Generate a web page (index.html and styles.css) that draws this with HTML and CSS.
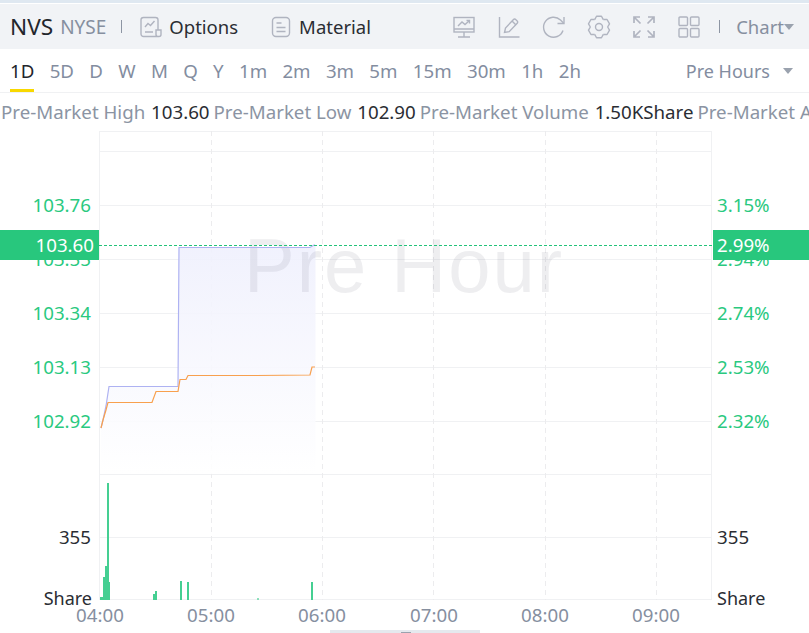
FILE: index.html
```html
<!DOCTYPE html>
<html>

<head>
  <title>NVS Pre Hours</title>
  <link rel="stylesheet" href="styles.css">
</head>

<body>
  <div class="toolbar">
    <span class="symbol">NVS</span>
    <span class="market">NYSE</span>
    <span class="divider"></span>
    <a class="tool-link options">
      <svg width="24" height="24" viewBox="0 0 24 24" fill="none" stroke="#b0b4c0" stroke-width="1.4">
        <path d="M19 15V5a2.500 2.500 0 0 0-2.500-2.500h-12A2.500 2.500 0 0 0 2 5v14a2.500 2.500 0 0 0 2.500 2.500H20a2 2 0 0 0 2-2V15h-5v4.500a2 2 0 0 0 2 2"/>
        <path d="M6 12l3-3.500 2.500 2 4-4.500M6 17h8"/>
      </svg>
      Options
    </a>
    <a class="tool-link material">
      <svg width="20" height="24" viewBox="0 0 20 24" fill="none" stroke="#b0b4c0" stroke-width="1.4">
        <rect x="1.500" y="2.500" width="17" height="19" rx="3.500"/>
        <path d="M5.500 8h5M5.500 12.500h9M5.500 16.500h9"/>
      </svg>
      Material
    </a>
    <div class="tool-icons">
      <svg width="24" height="24" viewBox="0 0 24 24" fill="none" stroke="#b0b4c0" stroke-width="1.4">
        <rect x="2" y="2.500" width="20" height="14.500"/>
        <path d="M2 14h20M12 17v5M6 22h12M6 11l4-4 3 2.500 4.500-4"/>
        <path d="M14.500 5.500h3v3"/>
      </svg>
      <svg width="24" height="24" viewBox="0 0 24 24" fill="none" stroke="#b0b4c0" stroke-width="1.4">
        <path d="M2.500 2v20h20"/>
        <path d="M7.500 17.500l1-4.500 8-8.500a1.500 1.500 0 0 1 2.200 0l1.500 1.500a1.500 1.500 0 0 1 0 2.200l-8 8.500z"/>
        <path d="M15 6l4 4"/>
      </svg>
      <svg width="24" height="24" viewBox="0 0 24 24" fill="none" stroke="#b0b4c0" stroke-width="1.4">
        <path d="M21 15.500A10 10 0 1 1 18.500 5L21.500 8"/>
        <path d="M22 2v6.500h-6.500"/>
      </svg>
      <svg width="24" height="24" viewBox="0 0 24 24" fill="none" stroke="#b0b4c0" stroke-width="1.4" stroke-linejoin="round">
        <path id="gearTooth" d="M7.700 4.550L9.530 1.280H14.470L16.300 4.550"/>
        <use href="#gearTooth" transform="rotate(60 12 12)"/>
        <use href="#gearTooth" transform="rotate(120 12 12)"/>
        <use href="#gearTooth" transform="rotate(180 12 12)"/>
        <use href="#gearTooth" transform="rotate(240 12 12)"/>
        <use href="#gearTooth" transform="rotate(300 12 12)"/>
        <circle cx="12" cy="12" r="3.500"/>
      </svg>
      <svg width="24" height="24" viewBox="0 0 24 24" fill="none" stroke="#b0b4c0" stroke-width="1.7">
        <path d="M2 8V2h6M2 2l6.500 6.500M16 2h6v6M22 2l-6.500 6.500M2 16v6h6M2 22l6.500-6.500M22 16v6h-6M22 22l-6.500-6.500"/>
      </svg>
      <svg width="24" height="24" viewBox="0 0 24 24" fill="none" stroke="#b0b4c0" stroke-width="1.4">
        <rect x="2" y="2" width="8.500" height="8.500" rx="1"/>
        <rect x="13.500" y="2" width="8.500" height="8.500" rx="1"/>
        <rect x="2" y="13.500" width="8.500" height="8.500" rx="1"/>
        <rect x="13.500" y="13.500" width="8.500" height="8.500" rx="1"/>
      </svg>
    </div>
    <span class="divider right"></span>
    <span class="chart-select">Chart<i class="caret"></i></span>
  </div>

  <div class="periods">
    <a class="active">1D</a>
    <a>5D</a>
    <a>D</a>
    <a>W</a>
    <a>M</a>
    <a>Q</a>
    <a>Y</a>
    <a>1m</a>
    <a>2m</a>
    <a>3m</a>
    <a>5m</a>
    <a>15m</a>
    <a>30m</a>
    <a>1h</a>
    <a>2h</a>
    <span class="session">Pre Hours<i class="caret"></i></span>
  </div>

  <div class="quote-row">
    <span>Pre-Market High <b>103.60</b></span>
    <span>Pre-Market Low <b>102.90</b></span>
    <span>Pre-Market Volume <b>1.50KShare</b></span>
    <span>Pre-Market Amount</span>
  </div>

  <svg class="chart" width="809" height="503" viewBox="0 130 809 503">
    <defs>
      <linearGradient id="areaFill" x1="0" y1="0" x2="0" y2="1">
        <stop offset="0" stop-color="#eff0fd"/>
        <stop offset="1" stop-color="#ffffff"/>
      </linearGradient>
    </defs>

    <g class="grid">
      <path d="M99 131.500H711M99 151.500H711M99 205.500H711M99 259.500H711M99 313.500H711M99 367.500H711M99 421.500H711M99 474.500H711M99 537.500H711M99 599.500H711"/>
      <path d="M99.500 131V600M711.500 131V600"/>
    </g>
    <path class="grid-dash" d="M211.500 131V600M322.500 131V600M433.500 131V600M545.500 131V600M656.500 131V600"/>

    <path class="area" d="M101 428L103 420 106 406 109 386.500H178L179 247.500H310L314 245H315.500V474H101z"/>
    <text class="watermark" x="404" y="292" text-anchor="middle">Pre Hour</text>
    <path class="avg-line" d="M101 428L103 420 106 406 109 386.500H178L179 247.500H310L314 245H315"/>
    <path class="price-line" d="M101 428L103 420 106 410 108 402.500H152L156 391.500H178L180 379.500H186L188 375.500H256L310 375 312 367H315"/>

    <g class="volume">
      <rect x="100" y="597" width="3" height="3"/>
      <rect x="103" y="577" width="2" height="23"/>
      <rect x="105" y="566" width="2" height="34"/>
      <rect x="107" y="483" width="2" height="117"/>
      <rect x="109" y="582" width="1" height="18"/>
      <rect x="153" y="594" width="2" height="6"/>
      <rect x="155" y="591" width="2" height="9"/>
      <rect x="180" y="581" width="2" height="19"/>
      <rect x="187" y="582" width="2" height="18"/>
      <rect x="257" y="598" width="2" height="2" opacity="0.6"/>
      <rect x="311" y="582" width="2" height="18"/>
    </g>

    <g class="axis-up">
      <text class="left" x="91" y="212">103.76</text>
      <text class="left" x="91" y="266">103.55</text>
      <text class="left" x="91" y="320">103.34</text>
      <text class="left" x="91" y="374">103.13</text>
      <text class="left" x="91" y="428">102.92</text>
      <text x="717" y="212">3.15%</text>
      <text x="717" y="266">2.94%</text>
      <text x="717" y="320">2.74%</text>
      <text x="717" y="374">2.53%</text>
      <text x="717" y="428">2.32%</text>
    </g>

    <g class="axis-volume">
      <text class="left" x="91" y="544">355</text>
      <text class="left share" x="92" y="605">Share</text>
      <text x="717" y="544">355</text>
      <text class="share" x="717" y="605">Share</text>
    </g>

    <g class="axis-time">
      <text x="100" y="622">04:00</text>
      <text x="211" y="622">05:00</text>
      <text x="322" y="622">06:00</text>
      <text x="434" y="622">07:00</text>
      <text x="545" y="622">08:00</text>
      <text x="656" y="622">09:00</text>
    </g>

    <path class="last-line" d="M99 245.500H713"/>
    <rect class="last-tag" x="0" y="230" width="99" height="30"/>
    <rect class="last-tag" x="713" y="230" width="96" height="30"/>
    <text class="last-text left" x="94" y="252">103.60</text>
    <text class="last-text" x="717" y="252">2.99%</text>

    <rect class="scroll-bar" x="330" y="630" width="150" height="3"/>
    <rect class="scroll-grip" x="401" y="632" width="10" height="1"/>
  </svg>
</body>

</html>
```

FILE: styles.css
```css
body {
  box-sizing: border-box;
  margin: 0;
  padding: 0;
  width: 809px;
  height: 633px;
  overflow: hidden;
  border-top: 3px solid #dfe8f1;
  background-color: #ffffff;
  font-family: "Noto Sans", Arial, sans-serif;
  color: #2a2d33;
}

.toolbar {
  display: flex;
  align-items: center;
  height: 45px;
  margin-top: 1px;
  padding-left: 10px;
  background-color: #f1f3f6;
  font-size: 18.5px;
}

.symbol {
  font-size: 22.6px;
  color: #23262c;
}

.market {
  margin-left: 7px;
  font-size: 19px;
  color: #868f9f;
}

.divider {
  flex-shrink: 0;
  width: 1px;
  height: 13px;
  margin-left: 15px;
  background-color: #8d95a3;
}

.divider.right {
  margin-left: 18px;
}

.tool-link {
  display: flex;
  align-items: center;
  gap: 6px;
  color: #2a2d33;
}

.options {
  margin-left: 17px;
}

.material {
  gap: 8px;
  margin-left: 33px;
}

.tool-icons {
  display: flex;
  gap: 21px;
  margin-left: auto;
}

.chart-select {
  display: flex;
  align-items: center;
  margin-left: 16px;
  margin-right: 15px;
  color: #868f9f;
}

.caret {
  display: inline-block;
  width: 0;
  height: 0;
  border-left: 5px solid transparent;
  border-right: 5px solid transparent;
  border-top: 6px solid #9aa2ae;
}

.periods {
  display: flex;
  align-items: center;
  height: 43px;
  padding-left: 10px;
  border-bottom: 1px solid #f0f1f3;
  font-size: 18.7px;
  color: #838da0;
}

.periods a {
  position: relative;
  margin-right: 15.3px;
}

.periods a.active {
  color: #23262c;
}

.periods a.active::after {
  content: "";
  position: absolute;
  left: 0;
  right: 0;
  bottom: -9px;
  height: 3px;
  background-color: #f8d800;
}

.session {
  display: flex;
  align-items: center;
  gap: 13px;
  margin-left: auto;
  margin-right: 16px;
  font-size: 18px;
}

.quote-row {
  display: flex;
  gap: 4px;
  height: 37px;
  align-items: center;
  padding-left: 1px;
  overflow: hidden;
  white-space: nowrap;
  font-size: 18.7px;
  color: #8b94a3;
}

.quote-row b {
  margin-left: 1px;
  font-weight: normal;
  color: #2a2d33;
}

.chart {
  display: block;
  font-family: "Noto Sans", Arial, sans-serif;
  font-size: 18.7px;
}

.watermark {
  font-family: "Liberation Sans", Arial, sans-serif;
  font-size: 76px;
  letter-spacing: 2px;
  fill: rgba(40, 40, 60, 0.08);
}

.grid path {
  stroke: #f0f1f3;
  stroke-width: 1;
  fill: none;
}

.grid-dash {
  stroke: #ececee;
  stroke-width: 1;
  stroke-dasharray: 5 4;
  fill: none;
}

.area {
  fill: url(#areaFill);
  opacity: 0.9;
}

.avg-line {
  stroke: #aeb2f2;
  stroke-width: 1.2;
  fill: none;
}

.price-line {
  stroke: #f8a04e;
  stroke-width: 1.2;
  fill: none;
}

.volume rect {
  fill: #45cf92;
}

.axis-up text {
  fill: #2ac97f;
}

.axis-volume text {
  fill: #2a2d33;
}

.axis-volume .share {
  font-size: 18px;
}

.axis-time text {
  fill: #868f9f;
  text-anchor: middle;
}

text.left {
  text-anchor: end;
}

.last-line {
  stroke: #22c37a;
  stroke-width: 1;
  stroke-dasharray: 3 2;
}

.last-tag {
  fill: #28c77d;
}

.last-text {
  fill: #ffffff;
}

.scroll-bar {
  fill: #e5e9ee;
}

.scroll-grip {
  fill: #9aa2ae;
}
```
